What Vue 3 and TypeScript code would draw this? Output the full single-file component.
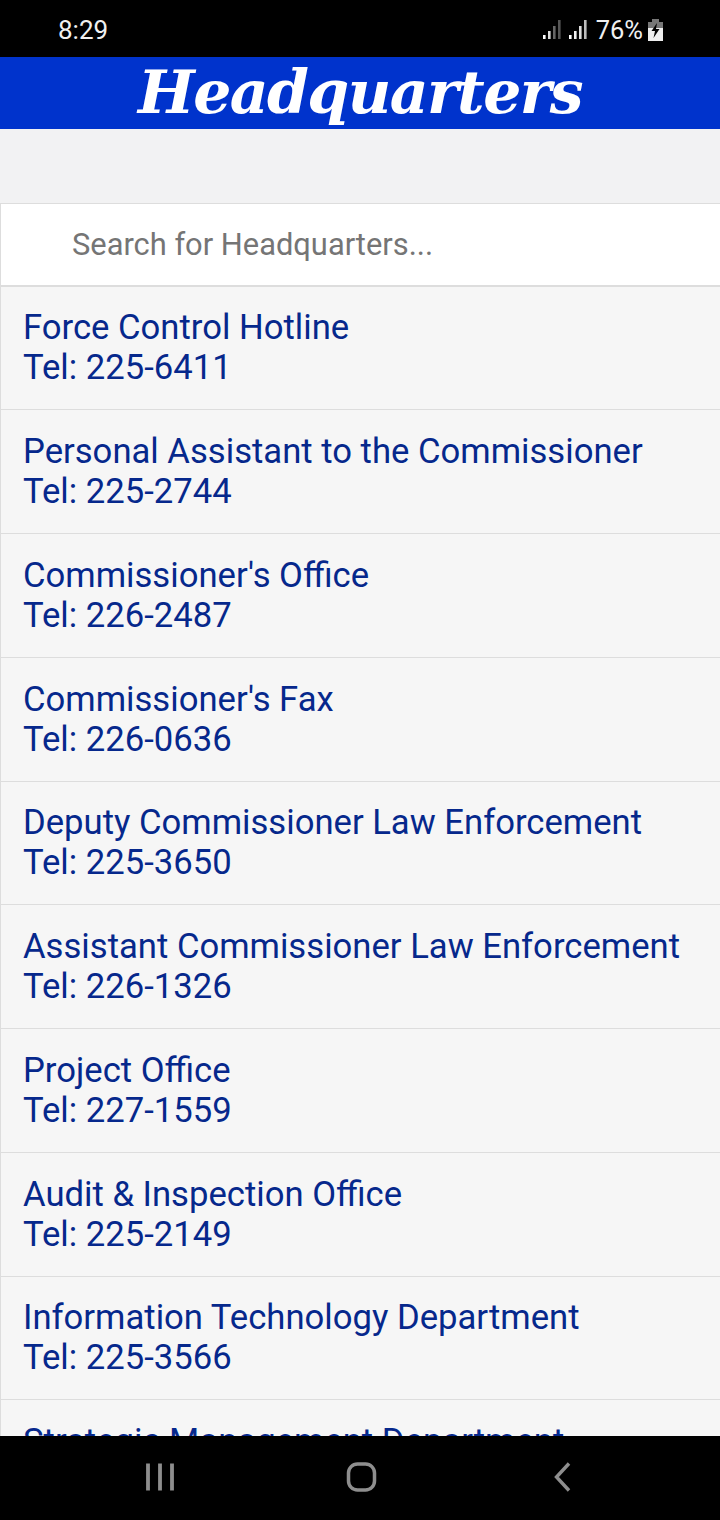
<script setup lang="ts">
interface Contact {
  name: string;
  tel: string;
}

const contacts: Contact[] = [
  { name: "Force Control Hotline", tel: "225-6411" },
  { name: "Personal Assistant to the Commissioner", tel: "225-2744" },
  { name: "Commissioner's Office", tel: "226-2487" },
  { name: "Commissioner's Fax", tel: "226-0636" },
  { name: "Deputy Commissioner Law Enforcement", tel: "225-3650" },
  { name: "Assistant Commissioner Law Enforcement", tel: "226-1326" },
  { name: "Project Office", tel: "227-1559" },
  { name: "Audit & Inspection Office", tel: "225-2149" },
  { name: "Information Technology Department", tel: "225-3566" },
  { name: "Strategic Management Department", tel: "225-0000" },
];
</script>

<template>
  <div class="phone">
    <div class="status">
      <span class="time">8:29</span>
      <div class="status-right">
        <svg class="signal" width="21" height="20" viewBox="0 0 21 20">
          <rect x="0" y="15" width="2.6" height="4" fill="#fff" />
          <rect x="5" y="11" width="2.6" height="8" fill="#ddd" />
          <rect x="10" y="6" width="2.6" height="13" fill="#666" />
          <rect x="15" y="0" width="2.6" height="19" fill="#555" />
        </svg>
        <svg class="signal" width="20" height="20" viewBox="0 0 20 20">
          <rect x="0" y="15" width="2.6" height="4" fill="#fff" />
          <rect x="5" y="11" width="2.6" height="8" fill="#eee" />
          <rect x="10" y="6" width="2.6" height="13" fill="#ddd" />
          <rect x="15" y="0" width="2.6" height="19" fill="#bbb" />
        </svg>
        <span class="pct">76%</span>
        <svg class="battery" width="15" height="22" viewBox="0 0 15 22">
          <rect x="4" y="0" width="7" height="3" fill="#777" />
          <rect x="0" y="3" width="15" height="6" fill="#777" />
          <rect x="0" y="9" width="15" height="13" fill="#eee" />
          <path d="M9 4 L3.5 12 L7 12 L5.5 19 L11.5 10 L8 10 Z" fill="#000" />
        </svg>
      </div>
    </div>

    <header class="title-bar">
      <h1>Headquarters</h1>
    </header>

    <main class="content">
      <input class="search" type="text" placeholder="Search for Headquarters..." />
      <ul class="list">
        <li v-for="c in contacts" :key="c.name" class="row">
          <a>{{ c.name }}<br />Tel: {{ c.tel }}</a>
        </li>
      </ul>
    </main>

    <nav class="navbar">
      <svg width="30" height="30" viewBox="0 0 30 30" fill="none" stroke="#8e8e8e" stroke-width="3.800">
        <path d="M3 1.500V28.500M15 1.500V28.500M27 1.500V28.500" />
      </svg>
      <svg width="32" height="32" viewBox="0 0 32 32" fill="none" stroke="#8e8e8e" stroke-width="3.500">
        <rect x="2.500" y="3" width="26" height="26" rx="9" />
      </svg>
      <svg width="24" height="30" viewBox="0 0 24 30" fill="none" stroke="#8e8e8e" stroke-width="3.400">
        <path d="M20 1.500L7.500 15L20 28.500" />
      </svg>
    </nav>
  </div>
</template>

<style>
html,
body {
  margin: 0;
  background: #000;
}
</style>

<style scoped>
.phone {
  width: 720px;
  height: 1520px;
  display: flex;
  flex-direction: column;
  overflow: hidden;
  font-family: Roboto, "Liberation Sans", sans-serif;
}

.status {
  height: 57px;
  flex: none;
  box-sizing: border-box;
  background: #000;
  color: #f0f0f0;
  display: flex;
  align-items: center;
  justify-content: space-between;
  padding: 2px 57px 0 58px;
  font-size: 26px;
}

.status-right {
  display: flex;
  align-items: center;
  gap: 5px;
}

.pct {
  margin-left: 2px;
  font-size: 25.500px;
}

.title-bar {
  height: 72px;
  flex: none;
  background: #0033cc;
  display: flex;
  justify-content: center;
  overflow: hidden;
}

.title-bar h1 {
  margin: 0;
  color: #fff;
  font-family: "DejaVu Serif", serif;
  font-style: italic;
  font-weight: 700;
  font-size: 60px;
  line-height: 70px;
  letter-spacing: -1.600px;
}

.content {
  flex: 1;
  min-height: 0;
  overflow: hidden;
  background: #f2f2f3;
  padding-top: 74px;
}

.search {
  display: block;
  box-sizing: border-box;
  width: 100%;
  height: 83.500px;
  margin: 0;
  padding: 0 0 0 71px;
  background: #fff;
  border: 1.500px solid #dddddd;
  border-right: 0;
  border-bottom-width: 2px;
  border-radius: 0;
  outline: none;
  font-family: Roboto, sans-serif;
  font-size: 30.850px;
  color: #757575;
}

.search::placeholder {
  color: #757575;
  opacity: 1;
}

.list {
  list-style: none;
  margin: 0;
  padding: 0;
}

.row {
  box-sizing: border-box;
  height: 123.750px;
  padding: 20.800px 0 0 22px;
  background: #f6f6f6;
  border-left: 1px solid #dddddd;
  border-bottom: 1px solid #dddddd;
  font-size: 34.650px;
  line-height: 40px;
  color: #06288c;
  white-space: nowrap;
}

.navbar {
  height: 84px;
  flex: none;
  box-sizing: border-box;
  background: #000;
  display: flex;
  align-items: center;
  padding: 0 0 2px 145px;
  gap: 171px;
}
</style>
